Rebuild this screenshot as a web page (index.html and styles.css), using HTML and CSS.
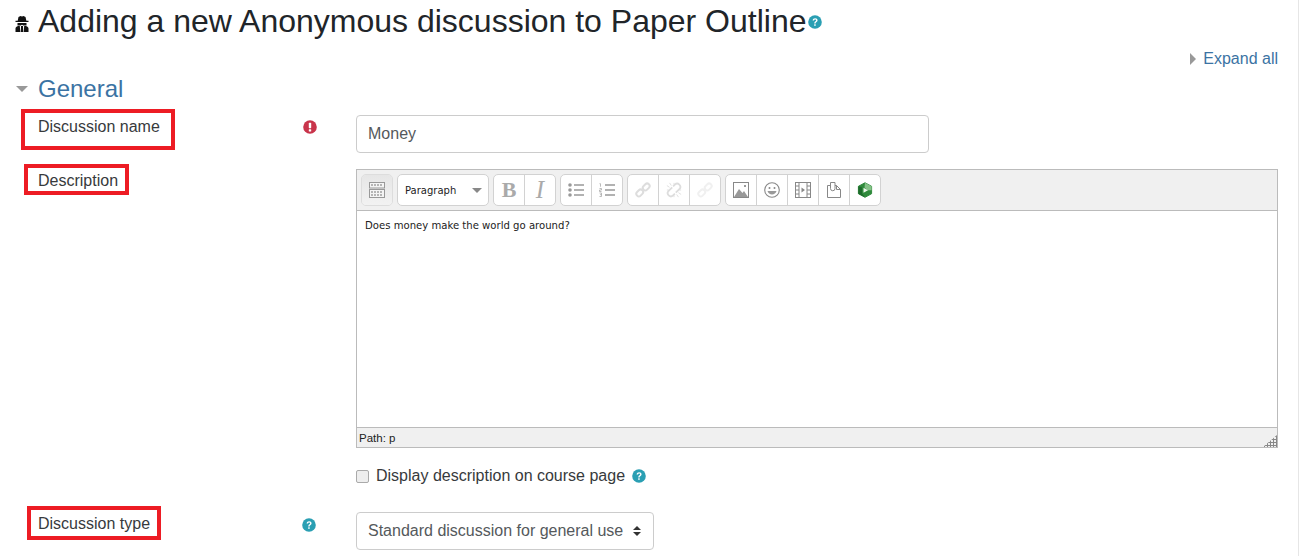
FILE: index.html
```html
<!DOCTYPE html>
<html lang="en">
<head>
    <meta charset="UTF-8">
    <title>Adding a new Anonymous discussion</title>
    <link rel="stylesheet" href="styles.css">
</head>
<body>
    <svg class="defs" width="0" height="0" aria-hidden="true">
        <symbol id="help" viewBox="0 0 14 14">
            <circle cx="7" cy="7" r="6.8" fill="currentColor"/>
            <path d="M4.6 5.4C4.8 3.9 5.8 3.2 7.1 3.2c1.400 0 2.500.8 2.500 2.100 0 1.900-2 1.700-2 3.200H6.200c0-2.200 1.900-2.100 1.900-3.100 0-.5-.4-.9-1-.9-.6 0-1 .4-1.100 1.100z" fill="#fff"/>
            <rect x="6.200" y="9.300" width="1.500" height="1.500" fill="#fff"/>
        </symbol>
    </svg>

    <div class="page">
        <h2 class="title">
            <svg class="spy" viewBox="0 0 14 16">
                <path d="M3.500 1 5.500 0 7 .6 8.500 0l2 1 .9 3.700H13.500V6H.5V4.700h2.200z" fill="#111"/>
                <path d="M2.500 7h9v2.600H8.300L7 8.700l-1.300.9H2.500z" fill="#111"/>
                <path d="M3 10h1.800l.6 6H.5v-3.400C.5 11.300 1.500 10.400 3 10zm8 0H9.200l-.6 6h4.900v-3.400c0-1.300-1-2.200-2.500-2.600zM6 10h2l.1 6H5.900z" fill="#111"/>
            </svg>
            <span>Adding a new Anonymous discussion to Paper Outline</span>
            <svg class="help help-title"><use href="#help"/></svg>
        </h2>

        <div class="expand"><i class="arrow-right"></i><a href="#">Expand all</a></div>

        <div class="section"><i class="arrow-down"></i><a href="#">General</a></div>

        <div class="row row-name">
            <label class="lbl mark-name">Discussion name</label>
            <svg class="req" viewBox="0 0 14 14">
                <circle cx="7" cy="7" r="6.800" fill="#c9344b"/>
                <rect x="5.800" y="2.800" width="2.400" height="5.400" rx=".6" fill="#fff"/>
                <rect x="5.800" y="9.200" width="2.400" height="2.200" rx=".5" fill="#fff"/>
            </svg>
            <div class="input">Money</div>
        </div>

        <div class="row row-desc">
            <label class="lbl mark-desc">Description</label>
            <span></span>
            <div class="editor">
                <div class="toolbar">
                    <div class="group group-pressed"><button class="btn pressed">
                        <svg viewBox="0 0 16 16" class="ico"><rect x=".5" y=".5" width="15" height="5.500" fill="#f4f4f4" stroke="#999"/><rect x=".5" y="7.500" width="15" height="8" fill="#f4f4f4" stroke="#999"/><path d="M2 3h12M2 10h12M2 13h12" stroke="#777" stroke-width="1.200" stroke-dasharray="2 1" fill="none"/></svg>
                    </button></div>
                    <div class="group para"><span>Paragraph</span><i class="caret"></i></div>
                    <div class="group">
                        <button class="btn letter bold">B</button>
                        <button class="btn letter ital">I</button>
                    </div>
                    <div class="group">
                        <button class="btn"><svg viewBox="0 0 16 14" class="ico"><circle cx="2" cy="2" r="1.800" fill="#999"/><circle cx="2" cy="7" r="1.800" fill="#999"/><circle cx="2" cy="12" r="1.800" fill="#999"/><path d="M6 2h10M6 7h10M6 12h10" stroke="#999" stroke-width="1.400"/></svg></button>
                        <button class="btn"><svg viewBox="0 0 16 14" class="ico"><path d="M.5 .700h1v3M.500 5.500h2v1.500h-2v1.500h2M.5 10h2v3.500h-2M1 11.700h1.500" stroke="#aaa" stroke-width=".8" fill="none"/><path d="M6 2h10M6 7h10M6 12h10" stroke="#999" stroke-width="1.400"/></svg></button>
                    </div>
                    <div class="group">
                        <button class="btn"><svg viewBox="0 0 16 16" class="ico"><g fill="none" stroke="#ddd" stroke-width="2"><rect x="1" y="8.500" width="7.500" height="5" rx="2.500" transform="rotate(-45 4.700 11)"/><rect x="7.500" y="2.500" width="7.500" height="5" rx="2.500" transform="rotate(-45 11.200 5)"/></g></svg></button>
                        <button class="btn"><svg viewBox="0 0 18 18" class="ico"><g fill="none" stroke="#ddd" stroke-width="2"><path d="M7 6 3 10a3 3 0 0 0 5 5l2-2"/><path d="M11 12l4-4a3 3 0 0 0-5-5L8 5"/></g><path d="M4 1l2 3M1 4l3 2M14 17l-2-3M17 14l-3-2M9 1v2M1 9h2M9 17v-2M17 9h-2" stroke="#ddd"/></svg></button>
                        <button class="btn"><svg viewBox="0 0 16 16" class="ico"><g fill="none" stroke="#f0f0f0" stroke-width="2"><rect x="1" y="8.500" width="7.500" height="5" rx="2.500" transform="rotate(-45 4.700 11)"/><rect x="7.500" y="2.500" width="7.500" height="5" rx="2.500" transform="rotate(-45 11.200 5)"/></g></svg></button>
                    </div>
                    <div class="group">
                        <button class="btn"><svg viewBox="0 0 16 16" class="ico"><rect x=".5" y=".5" width="15" height="15" fill="#fff" stroke="#888"/><path d="M1 15 6 7l3.500 4 1.500-2 4 6z" fill="#999"/><rect x="11" y="3" width="2" height="2" fill="#999"/></svg></button>
                        <button class="btn"><svg viewBox="0 0 16 16" class="ico"><circle cx="8" cy="8" r="7.300" fill="none" stroke="#888" stroke-width="1.100"/><circle cx="5.500" cy="6" r="1" fill="#888"/><circle cx="10.500" cy="6" r="1" fill="#888"/><path d="M3.500 9c.6 2.300 2.400 3.500 4.500 3.500s3.900-1.200 4.500-3.500z" fill="#999"/></svg></button>
                        <button class="btn"><svg viewBox="0 0 16 16" class="ico"><rect x=".5" y=".5" width="15" height="15" fill="#fff" stroke="#888"/><path d="M4 .5v15M12 .5v15M.5 4H4M.5 8H4M.5 12H4M12 4h3.500M12 8h3.500M12 12h3.500" stroke="#888" fill="none"/><path d="M6.500 5.500 10 8l-3.500 2.500z" fill="#888"/></svg></button>
                        <button class="btn"><svg viewBox="0 0 15 16" class="ico"><path d="M4 3.500H1v12h13v-8l-4-4H8.500M10 3.500v4h4" fill="none" stroke="#888"/><path d="M4 .5h4.500v6a2.200 2.200 0 0 1-4.500 0z" fill="none" stroke="#888"/></svg></button>
                        <button class="btn"><svg viewBox="0 0 16 16" class="ico"><path d="M8 .8 14.600 4.300v7.400L8 15.300 1.400 11.700V4.300z" fill="#2f8a3c" stroke="#2f8a3c" stroke-linejoin="round"/><path d="M8 .8 14.600 4.300v4H10.500L7.500 5.500z" fill="#86c288"/><path d="M1.400 11.700V4.300L5 5.500v6L8 15.300z" fill="#1d6a2b"/><path d="M6.500 5.800 11 8.300l-4.500 2.500z" fill="#eef7ec"/></svg></button>
                    </div>
                </div>
                <div class="content">Does money make the world go around?</div>
                <div class="status">
                    <span>Path: p</span>
                    <i class="grip"></i>
                </div>
            </div>
        </div>

        <div class="row row-check">
            <span></span>
            <span></span>
            <div class="check">
                <i class="box"></i>
                <span>Display description on course page</span>
                <svg class="help"><use href="#help"/></svg>
            </div>
        </div>

        <div class="row row-type">
            <label class="lbl mark-type">Discussion type</label>
            <svg class="help"><use href="#help"/></svg>
            <div class="select">
                <span>Standard discussion for general use</span>
                <i class="updown"></i>
            </div>
        </div>
    </div>
    <div class="edge"></div>
</body>
</html>
```

FILE: styles.css
```css
html, body {
    margin: 0;
    height: 556px;
    overflow: hidden;
}
body {
    font-family: "Liberation Sans", Arial, sans-serif;
    font-size: 16px;
    color: #373a3c;
    background: #fff;
}
.defs {
    display: block;
    height: 0;
}
.edge {
    position: absolute;
    top: 0;
    right: 2px;
    width: 1px;
    height: 556px;
    background: #e6e6e6;
}
.page {
    width: 1278px;
}
a {
    color: #3b73a3;
    text-decoration: none;
}
.help {
    width: 14px;
    height: 14px;
    color: #2a9fb3;
}

.title {
    box-sizing: border-box;
    display: flex;
    align-items: center;
    margin: 0;
    height: 44px;
    padding: 0 0 2px 15px;
    font-size: 32px;
    font-weight: 400;
    color: #212529;
}
.spy {
    width: 14px;
    height: 16px;
    margin: 5px 9px 0 0;
}
.help-title {
    margin: 2px 0 0 2px;
}

.expand {
    display: flex;
    align-items: center;
    justify-content: flex-end;
    height: 30px;
    font-size: 16px;
}
.arrow-right {
    width: 0;
    height: 0;
    margin-right: 7px;
    border-left: 6px solid #999;
    border-top: 6px solid transparent;
    border-bottom: 6px solid transparent;
}
.section {
    display: flex;
    align-items: center;
    height: 30px;
    padding-left: 16px;
    font-size: 24px;
}
.arrow-down {
    width: 0;
    height: 0;
    margin-right: 10px;
    border-top: 6px solid #999;
    border-left: 6px solid transparent;
    border-right: 6px solid transparent;
}

.row {
    display: grid;
    grid-template-columns: 302px 54px 1fr;
}
.lbl {
    position: relative;
    display: block;
    padding-left: 38px;
    color: #373a3c;
}
/* red boxes drawn over the screenshot */
.lbl::after {
    content: "";
    position: absolute;
    border: 4px solid #ed1c24;
}
.mark-name::after { left: 21px; top: -9px; width: 146px; height: 33px; }
.mark-desc::after { left: 24px; top: -8px; width: 97px; height: 23px; }
.mark-type::after { left: 27px; top: -9px; width: 126px; height: 26px; }

.row-name {
    height: 54px;
    margin-top: 11px;
}
.row-name .lbl { margin-top: 3px; }
.req {
    width: 14px;
    height: 14px;
    margin: 5px 0 0 1px;
}
.input {
    box-sizing: border-box;
    width: 573px;
    height: 38px;
    padding: 8px 11px;
    border: 1px solid #ccc;
    border-radius: 4px;
    color: #55595c;
    line-height: 20px;
}

.row-desc .lbl { margin-top: 3px; }
.editor {
    box-sizing: border-box;
    width: 922px;
    height: 279px;
    display: flex;
    flex-direction: column;
    border: 1px solid #bbb;
}
.toolbar {
    display: flex;
    gap: 4px;
    height: 41px;
    box-sizing: border-box;
    padding: 4px 0 0 4px;
    background: #f0f0f0;
    border-bottom: 1px solid #bbb;
}
.group {
    display: flex;
    height: 32px;
    box-sizing: border-box;
    background: #fff;
    border: 1px solid #d2d2d2;
    border-radius: 5px;
}
.group-pressed {
    border-color: #ddd;
    overflow: hidden;
}
.btn {
    width: 31px;
    height: 30px;
    padding: 0;
    display: flex;
    align-items: center;
    justify-content: center;
    background: none;
    border: none;
    border-right: 1px solid #d2d2d2;
    font-family: "Liberation Serif", serif;
}
.btn:last-child {
    width: 30px;
    border-right: none;
}
.pressed {
    background: linear-gradient(#e6e6e6, #f2f2f2);
}
.ico {
    width: 16px;
    height: 16px;
}
.letter {
    color: #aaa;
    font-size: 22px;
}
.bold { font-weight: 700; }
.ital { font-style: italic; font-size: 25px; }
.para {
    width: 92px;
    align-items: center;
    justify-content: space-between;
    padding: 0 6px 0 7px;
    font-size: 10px;
    font-family: "DejaVu Sans", sans-serif;
    color: #222;
}
.caret {
    border-top: 5px solid #888;
    border-left: 5px solid transparent;
    border-right: 5px solid transparent;
}
.content {
    flex: 1;
    padding: 8px;
    font-family: "DejaVu Sans", sans-serif;
    font-size: 10.100px;
    line-height: 14px;
    color: #222;
}
.status {
    display: flex;
    justify-content: space-between;
    align-items: center;
    height: 19px;
    padding-left: 2px;
    background: #f0f0f0;
    border-top: 1px solid #bbb;
    font-size: 11.500px;
    color: #222;
}
.grip {
    width: 14px;
    height: 12px;
    align-self: flex-end;
    background: radial-gradient(circle, #888 1px, transparent 1.200px) 0 0 / 3px 3px;
    clip-path: polygon(100% 0, 100% 100%, 0 100%);
}

.row-check {
    margin-top: 18px;
}
.check {
    display: flex;
    align-items: center;
    height: 20px;
}
.box {
    box-sizing: border-box;
    width: 13px;
    height: 13px;
    margin-right: 7px;
    background: #eee;
    border: 1px solid #aaa;
    border-radius: 2px;
}
.check .help {
    margin-left: 7px;
}

.row-type {
    margin-top: 26px;
}
.row-type .lbl {
    margin-top: 3px;
}
.row-type > .help {
    margin-top: 6px;
}
.select {
    box-sizing: border-box;
    display: flex;
    align-items: center;
    justify-content: space-between;
    width: 298px;
    height: 38px;
    padding: 0 12px 0 11px;
    border: 1px solid #ccc;
    border-radius: 4px;
    color: #55595c;
}
.updown {
    position: relative;
    width: 8px;
    height: 10px;
}
.updown::before, .updown::after {
    content: "";
    position: absolute;
    left: 0;
    border-left: 4px solid transparent;
    border-right: 4px solid transparent;
}
.updown::before { top: 0; border-bottom: 4px solid #333; }
.updown::after { bottom: 0; border-top: 4px solid #333; }
```
